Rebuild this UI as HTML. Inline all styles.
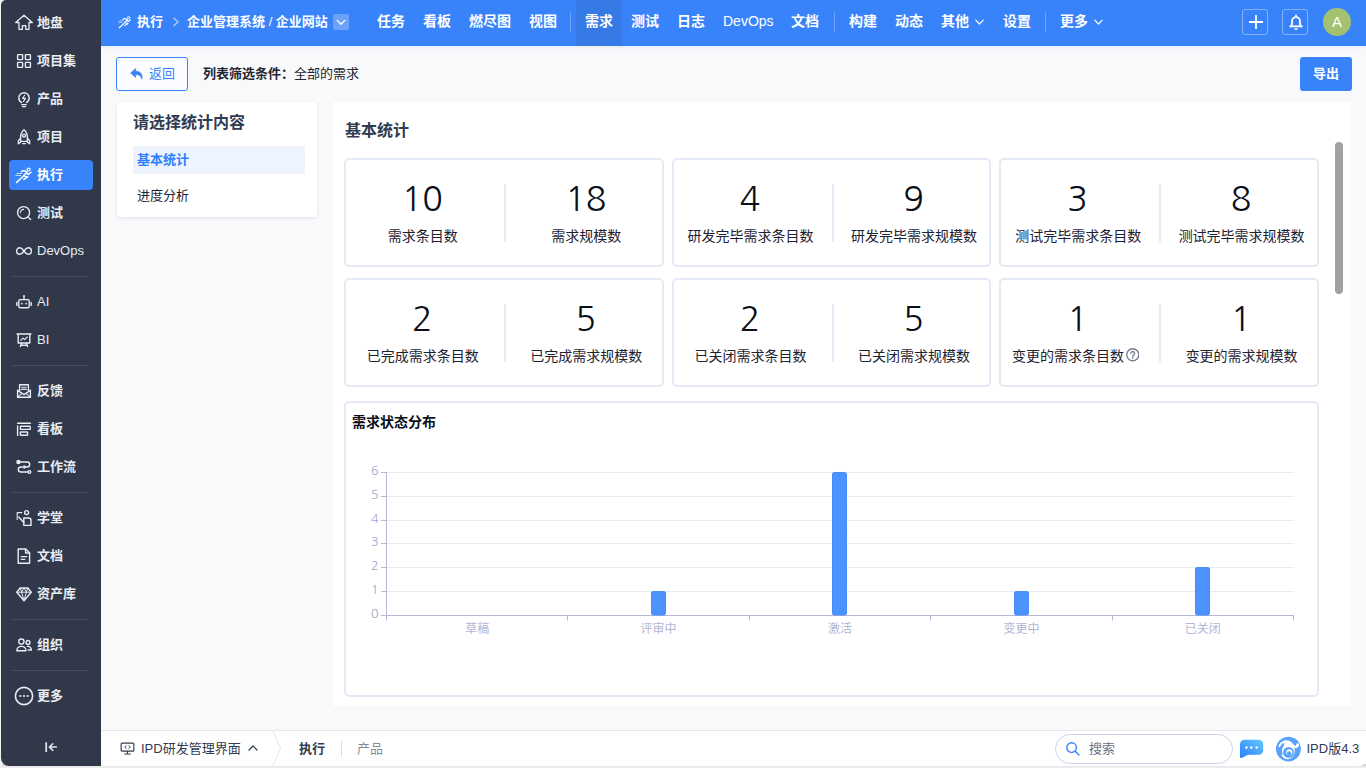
<!DOCTYPE html>
<html lang="zh-CN">
<head>
<meta charset="utf-8">
<title>需求统计</title>
<style>
*{box-sizing:border-box;margin:0;padding:0}
html,body{width:1366px;height:768px;overflow:hidden}
body{background:#f8f9fb;font-family:"Liberation Sans","Noto Sans CJK SC",sans-serif;font-size:13px;color:#313c52;position:relative}
.abs{position:absolute}
/* sidebar */
#side{position:absolute;left:1px;top:0;width:100px;height:766px;background:#303849;border-radius:5px 0 0 8px}
.mi{position:absolute;left:8px;width:84px;height:30px;border-radius:4px;color:#e9ecf3;font-weight:bold;font-size:13px;line-height:30px;white-space:nowrap}
.mi svg{position:absolute;left:6px;top:6px;width:18px;height:18px;fill:none;stroke:#e9ecf3;stroke-width:1.4;stroke-linecap:round;stroke-linejoin:round}
.mi span{position:absolute;left:28px;top:0}
.mi.lat{font-weight:normal}
.mi.on{background:#3883fa;color:#fff}
.mi.on svg{stroke:#fff}
.mi svg{overflow:visible}
.sdiv{position:absolute;left:12px;width:76px;height:1px;background:#475064}
/* header */
#head{position:absolute;left:101px;top:0;width:1265px;height:46px;background:#3883fa;color:#fff;box-shadow:0 1px 3px rgba(30,50,90,.10)}
#head .t{position:absolute;top:0;height:46px;line-height:42px;font-size:14px;font-weight:bold;white-space:nowrap;color:#fff}
#head .n{font-weight:normal}
#head .b13{font-size:13px;line-height:44px}
.hb{top:9px;width:26px;height:26px;border:1px solid #83b1fc;border-radius:3px}
#head .vd{position:absolute;top:12px;width:1px;height:20px;background:#6ea4fb}
/* toolbar */
#back{position:absolute;left:116px;top:57px;width:72px;height:34px;border:1px solid #3883fa;border-radius:3px;background:#fbfcff;color:#3883fa;font-size:13px;line-height:32px}
#exp{position:absolute;left:1300px;top:57px;width:52px;height:34px;border-radius:3px;background:#3883fa;color:#fff;font-weight:bold;font-size:13px;line-height:33px;text-align:center}
/* panels */
#lp{position:absolute;left:117px;top:102px;width:200px;height:115px;background:#fff;border-radius:3px;box-shadow:0 1px 3px rgba(40,60,100,.12)}
#mp{position:absolute;left:333px;top:102px;width:1018px;height:604px;background:#fff}
.card{position:absolute;width:319.670px;height:109px;border:2px solid #e4e9f7;border-radius:5px;background:#fff}
.card .c{position:absolute;top:0;width:158px;height:104px;text-align:center}
.card .num{position:absolute;left:-1px;right:0;top:19px;font-size:34px;line-height:40px;color:#0b0f18;font-family:"NanumGothic","Liberation Sans",sans-serif}
.card .lb{position:absolute;left:0;right:0;top:66px;font-size:14px;line-height:20px;color:#1c2230;white-space:nowrap}
.card .sep{position:absolute;left:158px;top:24px;width:2px;height:58px;background:#e6ebf8}
/* footer */
#foot{position:absolute;left:101px;top:730px;width:1265px;height:36px;background:#fff;border-top:1px solid #e6e8ee;border-radius:0 0 7px 0}
</style>
</head>
<body>
<div class="abs" style="left:0;top:764px;width:1366px;height:4px;background:linear-gradient(#dcdcdc 50%,#e6e6e6 50%,#f0f0f0)"></div>
<div class="abs" style="left:0;top:0;width:2px;height:768px;background:#f1f1f1"></div>
<div id="side">
<div class="mi" style="top:8px"><svg viewBox="0 0 18 18"><path d="M9 1.3 17.3 8.5H14V15.3H10.8V11.7H7.4V15.3H4V8.5H.7Z" stroke-width="1.3"/></svg><span>地盘</span></div>
<div class="mi" style="top:46px"><svg viewBox="0 0 18 18"><rect x="2.6" y="2.6" width="5" height="5" rx=".6"/><rect x="10.4" y="2.6" width="5" height="5" rx=".6"/><rect x="2.6" y="10.4" width="5" height="5" rx=".6"/><rect x="10.4" y="10.4" width="5" height="5" rx=".6"/></svg><span>项目集</span></div>
<div class="mi" style="top:84px"><svg viewBox="0 0 18 18"><path d="M6.6 12.6C4.9 11.7 3.8 10 3.8 8a5.2 5.2 0 0 1 10.4 0c0 2-1.100 3.700-2.800 4.600"/><path d="M6.800 14.600h4.400M7.400 16.600h3.200"/><path d="M9.600 5.200 7.600 8.400h2.800l-2 3.200" stroke-width="1.100"/></svg><span>产品</span></div>
<div class="mi" style="top:122px"><svg viewBox="0 0 18 18"><path d="M9 1.800c2.400 2 3.400 4.600 3.400 7.400v4.200H5.600V9.200C5.600 6.400 6.600 3.800 9 1.800z"/><circle cx="9" cy="7.600" r="1.500"/><path d="M5.600 10.200 3.400 12.600v3.200l2.200-1.600M12.400 10.200l2.200 2.400v3.200l-2.200-1.600M7.600 15.600h2.800"/></svg><span>项目</span></div>
<div class="mi on" style="top:160px"><svg viewBox="0 0 18 18"><circle cx="13.600" cy="3.500" r="1.500" stroke-width="1.200"/><path d="M6.400 5.600C7.800 4.500 9.400 4.500 10.800 5.400L12 5.900 8.600 9.700l4.200 1.200-4 2.500M7.800 10.800 1.600 16.400M11.400 6.800 13.400 8.400 16 6.200" stroke-width="1.500"/><path d="M1.800 7.500h5M.8 9.500h4.800" stroke-width=".9" opacity=".8"/></svg><span>执行</span></div>
<div class="mi" style="top:198px"><svg viewBox="0 0 18 18"><circle cx="8.600" cy="8.600" r="6"/><path d="M13 13l2.600 2.600"/><path d="M5.400 8.600A3.200 3.200 0 0 1 8.600 5.400" stroke-width="1.100"/></svg><span>测试</span></div>
<div class="mi lat" style="top:236px"><svg viewBox="0 0 18 18"><path d="M9 9C7.600 6.800 6.400 5.800 4.800 5.800a3.200 3.200 0 0 0 0 6.400C6.400 12.200 7.600 11.200 9 9s2.600-3.200 4.200-3.200a3.200 3.200 0 0 1 0 6.400C11.600 12.200 10.400 11.200 9 9z"/></svg><span>DevOps</span></div>
<div class="mi lat" style="top:287px"><svg viewBox="0 0 18 18"><rect x="3.800" y="6.600" width="10.400" height="8.200" rx="1.400"/><path d="M9 6.400V3.200"/><circle cx="9" cy="2.800" r=".8" fill="#e9ecf3" stroke="none"/><path d="M1.800 9.400v3M16.200 9.400v3"/><circle cx="6.900" cy="10.600" r=".9" fill="#e9ecf3" stroke="none"/><circle cx="11.100" cy="10.600" r=".9" fill="#e9ecf3" stroke="none"/></svg><span>AI</span></div>
<div class="mi lat" style="top:325px"><svg viewBox="0 0 18 18"><path d="M2 3h14M3.200 3v9h11.600V3M6.600 12.200 5.400 15.600M11.400 12.200l1.200 3.400M5.800 14.200h6.400"/><path d="M5.800 9.400 8 7.200l1.600 1.400 2.600-2.600" stroke-width="1.100"/></svg><span>BI</span></div>
<div class="mi" style="top:376px"><svg viewBox="0 0 18 18"><path d="M2.600 8.200V15.200h12.800V8.200"/><path d="M2.600 8.400 9 12.600l6.400-4.200"/><path d="M4.600 9.400V2.800h8.800v6.600"/><path d="M6.600 5.200h4.800M6.600 7.400h4.800" stroke-width="1.100"/><path d="M2.600 15.200 7 11.400M15.400 15.200 11 11.400" stroke-width="1.100"/></svg><span>反馈</span></div>
<div class="mi" style="top:414px"><svg viewBox="0 0 18 18"><path d="M2.600 3.200h12.800"/><rect x="5.400" y="6.200" width="9.800" height="3.200" rx=".5"/><rect x="5.400" y="12" width="7.200" height="3.200" rx=".5"/><path d="M2.600 6v9.400"/></svg><span>看板</span></div>
<div class="mi" style="top:452px"><svg viewBox="0 0 18 18"><circle cx="3.400" cy="4" r="1.500" fill="#e9ecf3"/><path d="M5 4h7.200a2.500 2.500 0 0 1 0 5H5.800a2.500 2.500 0 0 0 0 5H12.800"/><path d="M9 7.600 10.600 9 9 10.400" stroke-width="1.100"/><circle cx="14.400" cy="14" r="1.400"/></svg><span>工作流</span></div>
<div class="mi" style="top:503px"><svg viewBox="0 0 18 18"><circle cx="11.600" cy="3.600" r="2"/><path d="M8.800 9h4.800a2.400 2.400 0 0 1 2.400 2.400v5H8.800z"/><path d="M3.800 8 8.800 13.400"/><path d="M2.200 3.600h4.600M2.200 3.600v6.800" stroke-width="1.100"/></svg><span>学堂</span></div>
<div class="mi" style="top:541px"><svg viewBox="0 0 18 18"><path d="M3.200 2h7.600l3.800 3.800v10.400H3.200z"/><path d="M10.600 2.200v3.800h3.800"/><path d="M6.200 9.600h5.600M6.200 12.400h3.600" stroke-width="1.100"/></svg><span>文档</span></div>
<div class="mi" style="top:579px"><svg viewBox="0 0 18 18"><path d="M5.200 3h7.600l3.400 4.200L9 15.800 1.800 7.200z"/><path d="M1.800 7.200h14.400M6.600 7.200 9 15.600l2.400-8.400M5.200 3l1.400 4.200L9 3l2.400 4.200L12.800 3" stroke-width="1"/></svg><span>资产库</span></div>
<div class="mi" style="top:630px"><svg viewBox="0 0 18 18"><circle cx="6.400" cy="5.600" r="2.600"/><path d="M1.800 14.800c0-2.600 2-4.400 4.600-4.400s4.600 1.800 4.600 4.400z"/><circle cx="13" cy="6.400" r="1.900"/><path d="M12.400 10.400c2.200-.4 4 1.200 4 3.600h-3.200"/></svg><span>组织</span></div>
<div class="mi" style="top:681px"><svg viewBox="0 0 18 18"><circle cx="9" cy="9" r="8.600" stroke-width="1.600"/><circle cx="5.400" cy="9" r="1.100" fill="#e9ecf3" stroke="none"/><circle cx="9" cy="9" r="1.100" fill="#e9ecf3" stroke="none"/><circle cx="12.600" cy="9" r="1.100" fill="#e9ecf3" stroke="none"/></svg><span>更多</span></div>
<div class="sdiv" style="top:276px"></div>
<div class="sdiv" style="top:365px"></div>
<div class="sdiv" style="top:492px"></div>
<div class="sdiv" style="top:619px"></div>
<div class="sdiv" style="top:670px"></div>
<svg class="abs" style="left:42px;top:740px" width="16" height="14" viewBox="0 0 16 14" fill="none" stroke="#dfe3ec" stroke-width="1.500" stroke-linecap="round" stroke-linejoin="round"><path d="M3.200 2.900v8.400" stroke-width="1.800"/><path d="M13.400 7.100H6.600M9.800 3.800 6.400 7.100 9.800 10.400"/></svg>
</div>
<div id="head">
<svg class="abs" style="left:16.500px;top:15px" width="14" height="14" viewBox="0 0 18 18" fill="none" stroke="#fff" stroke-linecap="round" stroke-linejoin="round"><circle cx="13.600" cy="3.500" r="1.500" stroke-width="1.200"/><path d="M6.400 5.600C7.800 4.500 9.400 4.500 10.800 5.400L12 5.900 8.600 9.700l4.200 1.200-4 2.500M7.800 10.800 1.600 16.400M11.400 6.800 13.400 8.400 16 6.200" stroke-width="1.500"/><path d="M1.800 7.500h5M.8 9.500h4.800" stroke-width=".9" opacity=".8"/></svg>
<div class="t b13" style="left:36px">执行</div>
<svg class="abs" style="left:71px;top:16px" width="8" height="12" viewBox="0 0 8 12" fill="none" stroke="#a9c8fd" stroke-width="1.500" stroke-linecap="round" stroke-linejoin="round"><path d="M2 2.200 6 6 2 9.800"/></svg>
<div class="t b13" style="left:86px">企业管理系统 <span style="font-weight:normal">/</span> 企业网站</div>
<div class="abs" style="left:232px;top:14px;width:16px;height:16px;border-radius:2px;background:#6ba3fb"><svg class="abs" style="left:3px;top:5px" width="10" height="7" viewBox="0 0 10 7" fill="none" stroke="#fff" stroke-width="1.300" stroke-linecap="round" stroke-linejoin="round"><path d="M1.200 1.400 5 5.200 8.800 1.400"/></svg></div>
<div class="abs" style="left:475px;top:0;width:46px;height:46px;background:#367ae5"></div>
<div class="t" style="left:276px">任务</div>
<div class="t" style="left:322px">看板</div>
<div class="t" style="left:368px">燃尽图</div>
<div class="t" style="left:428px">视图</div>
<div class="t" style="left:484px">需求</div>
<div class="t" style="left:530px">测试</div>
<div class="t" style="left:576px">日志</div>
<div class="t n" style="left:622px">DevOps</div>
<div class="t" style="left:690px">文档</div>
<div class="t" style="left:748px">构建</div>
<div class="t" style="left:794px">动态</div>
<div class="t" style="left:840px">其他</div>
<div class="t" style="left:902px">设置</div>
<div class="t" style="left:959px">更多</div>
<div class="vd" style="left:469px"></div>
<div class="vd" style="left:733px"></div>
<div class="vd" style="left:944px"></div>
<svg class="abs" style="left:874px;top:19px" width="9" height="7" viewBox="0 0 9 7" fill="none" stroke="#fff" stroke-width="1.200" stroke-linecap="round" stroke-linejoin="round"><path d="M.8 1.200 4.500 5 8.200 1.200"/></svg>
<svg class="abs" style="left:993px;top:19px" width="9" height="7" viewBox="0 0 9 7" fill="none" stroke="#fff" stroke-width="1.200" stroke-linecap="round" stroke-linejoin="round"><path d="M.8 1.200 4.500 5 8.200 1.200"/></svg>
<div class="abs hb" style="left:1141px"><svg class="abs" style="left:5.5px;top:5px" width="14" height="14" viewBox="0 0 14 14" fill="none" stroke="#fff" stroke-width="1.800"><path d="M7 0v14M0 7h14"/></svg></div>
<div class="abs hb" style="left:1181px"><svg class="abs" style="left:5.5px;top:4px" width="14" height="16" viewBox="0 0 14 16" fill="none" stroke="#fff" stroke-width="1.800" stroke-linejoin="round"><path d="M2.2 12.2C3.2 11 3 9.4 3 7.2a4 4 0 0 1 8 0c0 2.2-.2 3.800.8 5M.4 12.400h13.200"/><path d="M7 .4v2" stroke-width="1.600"/><path d="M5.600 15h2.800" stroke-width="1.600"/></svg></div>
<div class="abs" style="left:1222px;top:8px;width:28px;height:28px;border-radius:14px;background:#a4c170;color:#fff;font-size:15px;line-height:27px;text-align:center">A</div>
</div>
<div id="back"><svg class="abs" style="left:13px;top:10px" width="14" height="12" viewBox="0 0 14 12" fill="#3883fa" stroke="#3883fa" stroke-width=".7" stroke-linejoin="round"><path d="M5.600.6.600 5l5 4.400V6.600c3.400 0 5.400 1 6.200 4.600C12.800 6 10.400 3.400 5.600 3.200z"/></svg><span class="abs" style="left:32px;top:0">返回</span></div>
<div class="abs" style="left:203px;top:58px;height:34px;line-height:32px;font-size:13px;color:#1f2633;white-space:nowrap"><b>列表筛选条件：</b>全部的需求</div>
<div id="exp">导出</div>
<div id="lp">
<div class="abs" style="left:16px;top:9px;font-size:16px;font-weight:bold;line-height:24px;color:#313c52;white-space:nowrap">请选择统计内容</div>
<div class="abs" style="left:16px;top:44px;width:172px;height:28px;background:#edf4fe;color:#2e7fff;font-weight:bold;font-size:13px;line-height:27px;padding-left:4px">基本统计</div>
<div class="abs" style="left:20px;top:84px;font-size:13px;line-height:20px;color:#1f2633">进度分析</div>
</div>
<div id="mp">
<div class="abs" style="left:12px;top:17px;font-size:16px;font-weight:bold;line-height:24px;color:#313c52">基本统计</div>
<div class="card" style="left:11px;top:56px">
<div class="c" style="left:-2.2px"><div class="num">10</div><div class="lb">需求条目数</div></div>
<div class="c" style="left:161.3px"><div class="num">18</div><div class="lb">需求规模数</div></div>
<div class="sep"></div></div>
<div class="card" style="left:338.670px;top:56px">
<div class="c" style="left:-2.2px"><div class="num">4</div><div class="lb">研发完毕需求条目数</div></div>
<div class="c" style="left:161.3px"><div class="num">9</div><div class="lb">研发完毕需求规模数</div></div>
<div class="sep"></div></div>
<div class="card" style="left:666.330px;top:56px">
<div class="c" style="left:-2.2px"><div class="num">3</div><div class="lb">测试完毕需求条目数</div></div>
<div class="c" style="left:161.3px"><div class="num">8</div><div class="lb">测试完毕需求规模数</div></div>
<div class="sep"></div></div>
<div class="card" style="left:11px;top:176px">
<div class="c" style="left:-2.2px"><div class="num">2</div><div class="lb">已完成需求条目数</div></div>
<div class="c" style="left:161.3px"><div class="num">5</div><div class="lb">已完成需求规模数</div></div>
<div class="sep"></div></div>
<div class="card" style="left:338.670px;top:176px">
<div class="c" style="left:-2.2px"><div class="num">2</div><div class="lb">已关闭需求条目数</div></div>
<div class="c" style="left:161.3px"><div class="num">5</div><div class="lb">已关闭需求规模数</div></div>
<div class="sep"></div></div>
<div class="card" style="left:666.330px;top:176px">
<div class="c" style="left:-2.2px"><div class="num">1</div><div class="lb" style="left:-4.800px">变更的需求条目数<svg style="display:inline-block;vertical-align:-.5px;margin-left:2px" width="13.500" height="13.500" viewBox="0 0 13 13" fill="none" stroke="#747b8c" stroke-width="1.250"><circle cx="6.500" cy="6.500" r="5.800"/><path d="M4.700 5.200a1.800 1.800 0 1 1 2.600 1.600c-.6.300-.8.700-.8 1.300" stroke-linecap="round"/><circle cx="6.500" cy="9.700" r=".8" fill="#747b8c" stroke="none"/></svg></div></div>
<div class="c" style="left:161.3px"><div class="num">1</div><div class="lb">变更的需求规模数</div></div>
<div class="sep"></div></div>
<div class="abs" style="left:11px;top:299px;width:975px;height:296px;border:2px solid #e4e9f7;border-radius:5px"></div>
<div class="abs" style="left:19px;top:310px;font-size:14px;font-weight:bold;line-height:20px;color:#0b0f18">需求状态分布</div>
<svg class="abs" style="left:0;top:350px" width="1003" height="200" viewBox="333 452 1003 200" font-family="Liberation Sans, Noto Sans CJK SC, sans-serif" font-size="12"><path d="M386.5 591.5H1294.0" stroke="#e8eaf3" stroke-width="1"/><path d="M386.5 567.5H1294.0" stroke="#e8eaf3" stroke-width="1"/><path d="M386.5 543.5H1294.0" stroke="#e8eaf3" stroke-width="1"/><path d="M386.5 520.5H1294.0" stroke="#e8eaf3" stroke-width="1"/><path d="M386.5 496.5H1294.0" stroke="#e8eaf3" stroke-width="1"/><path d="M386.5 472.5H1294.0" stroke="#e8eaf3" stroke-width="1"/><path d="M386.5 472.0V615.5H1294.0" fill="none" stroke="#b6b8d6" stroke-width="1"/><path d="M381 615.5h5.500" stroke="#b6b8d6" stroke-width="1"/><text x="378.600" y="618.1" text-anchor="end" fill="#a4a8cc" font-family="NanumGothic, Liberation Sans, sans-serif" font-size="12.500">0</text><path d="M381 591.5h5.500" stroke="#b6b8d6" stroke-width="1"/><text x="378.600" y="594.1" text-anchor="end" fill="#a4a8cc" font-family="NanumGothic, Liberation Sans, sans-serif" font-size="12.500">1</text><path d="M381 567.5h5.500" stroke="#b6b8d6" stroke-width="1"/><text x="378.600" y="570.1" text-anchor="end" fill="#a4a8cc" font-family="NanumGothic, Liberation Sans, sans-serif" font-size="12.500">2</text><path d="M381 543.5h5.500" stroke="#b6b8d6" stroke-width="1"/><text x="378.600" y="546.1" text-anchor="end" fill="#a4a8cc" font-family="NanumGothic, Liberation Sans, sans-serif" font-size="12.500">3</text><path d="M381 520.5h5.500" stroke="#b6b8d6" stroke-width="1"/><text x="378.600" y="523.1" text-anchor="end" fill="#a4a8cc" font-family="NanumGothic, Liberation Sans, sans-serif" font-size="12.500">4</text><path d="M381 496.5h5.500" stroke="#b6b8d6" stroke-width="1"/><text x="378.600" y="499.1" text-anchor="end" fill="#a4a8cc" font-family="NanumGothic, Liberation Sans, sans-serif" font-size="12.500">5</text><path d="M381 472.5h5.500" stroke="#b6b8d6" stroke-width="1"/><text x="378.600" y="475.1" text-anchor="end" fill="#a4a8cc" font-family="NanumGothic, Liberation Sans, sans-serif" font-size="12.500">6</text><path d="M386.5 615.5v5" stroke="#b6b8d6" stroke-width="1"/><path d="M567.5 615.5v5" stroke="#b6b8d6" stroke-width="1"/><path d="M749.5 615.5v5" stroke="#b6b8d6" stroke-width="1"/><path d="M930.5 615.5v5" stroke="#b6b8d6" stroke-width="1"/><path d="M1112.5 615.5v5" stroke="#b6b8d6" stroke-width="1"/><path d="M1293.5 615.5v5" stroke="#b6b8d6" stroke-width="1"/><text x="477.2" y="632.500" text-anchor="middle" fill="#b3b6d6">草稿</text><text x="658.6" y="632.500" text-anchor="middle" fill="#b3b6d6">评审中</text><rect x="651.5" y="591.5" width="14" height="23.5" rx="1.800" fill="#4b93ff" stroke="#458cf6" stroke-width="1"/><text x="840.0" y="632.500" text-anchor="middle" fill="#b3b6d6">激活</text><rect x="832.5" y="472.5" width="14" height="142.5" rx="1.800" fill="#4b93ff" stroke="#458cf6" stroke-width="1"/><text x="1021.4" y="632.500" text-anchor="middle" fill="#b3b6d6">变更中</text><rect x="1014.5" y="591.5" width="14" height="23.5" rx="1.800" fill="#4b93ff" stroke="#458cf6" stroke-width="1"/><text x="1202.8" y="632.500" text-anchor="middle" fill="#b3b6d6">已关闭</text><rect x="1195.5" y="567.5" width="14" height="47.5" rx="1.800" fill="#4b93ff" stroke="#458cf6" stroke-width="1"/></svg>
</div>
<div class="abs" style="left:1335px;top:142px;width:8px;height:152px;border-radius:4px;background:#a1a1a1"></div>
<div id="foot">
<svg class="abs" style="left:19px;top:11px" width="15" height="13.100" viewBox="0 0 16 14" fill="none" stroke="#313c52" stroke-width="1.250" stroke-linecap="round" stroke-linejoin="round"><rect x="1.200" y="1.200" width="13.600" height="8.600" rx="1"/><path d="M8 10v2.600M5 12.800h6"/><path d="M6.600 4 5 5.500l1.600 1.500M9.400 4 11 5.500 9.400 7" stroke-width="1"/></svg>
<div class="abs" style="left:40px;top:8px;font-size:13px;line-height:20px;color:#313c52;white-space:nowrap">IPD研发管理界面</div>
<svg class="abs" style="left:147px;top:13px" width="10" height="8" viewBox="0 0 10 8" fill="none" stroke="#313c52" stroke-width="1.200" stroke-linecap="round" stroke-linejoin="round"><path d="M1 6 5 2l4 4"/></svg>
<svg class="abs" style="left:171px;top:0px" width="10" height="35" viewBox="0 0 10 35" fill="none" stroke="#e3e6ec" stroke-width="1"><path d="M1 0 8.500 17.500 1 35"/></svg>
<div class="abs" style="left:198px;top:8px;font-size:13px;font-weight:bold;line-height:20px;color:#313c52">执行</div>
<div class="abs" style="left:240px;top:10px;width:1px;height:16px;background:#dcdfe6"></div>
<div class="abs" style="left:256px;top:8px;font-size:13px;line-height:20px;color:#838a9d">产品</div>
<div class="abs" style="left:954px;top:3px;width:178px;height:30px;border:1px solid #cdd3ee;border-radius:15px;background:#fff"><svg class="abs" style="left:9px;top:6px" width="16" height="16" viewBox="0 0 16 16" fill="none" stroke="#3883fa" stroke-width="1.400" stroke-linecap="round"><circle cx="6.600" cy="6.600" r="4.800"/><path d="M10.200 10.200 14 14"/></svg><span class="abs" style="left:33px;top:4px;font-size:13px;line-height:20px;color:#6b7385">搜索</span></div>
<svg class="abs" style="left:1139px;top:8px" width="24" height="20" viewBox="0 0 24 20"><defs><linearGradient id="cg" x1="0" y1="1" x2="1" y2="0"><stop offset="0" stop-color="#2a80fb"/><stop offset="1" stop-color="#63c8fc"/></linearGradient></defs><path d="M4.500.8H18.700A4.500 4.500 0 0 1 23.200 5.300V11.200A4.500 4.500 0 0 1 18.700 15.700H10C6.500 15.700 4 17.800 1.600 19 .8 19.300 0 18.800 0 17.800V5.300A4.500 4.500 0 0 1 4.500.8Z" fill="url(#cg)"/><circle cx="6.400" cy="8.550" r="1.250" fill="#fff"/><circle cx="11.300" cy="8.550" r="1.250" fill="#fff"/><circle cx="16.700" cy="8.550" r="1.250" fill="#fff"/></svg>
<svg class="abs" style="left:1173px;top:4px" width="28" height="28" viewBox="-14.400 -14.040 28 28"><circle r="12.400" fill="#57a2fb"/><ellipse cx="-.9" cy="2" rx="7.300" ry="8.200" fill="#fff"/><path d="M-8.600-3.100C-7-7-2-9 1.500-6.400 3.600-4.800 4.400-2.200 7.200-2 8.600-2 9.200-3.200 9.300-4.600" fill="none" stroke="#fff" stroke-width="2.600" stroke-linecap="round"/><path d="M-5.500-4.400C-6.600-3.200-7.500-1.200-7.650 1.300-7.700 2.800-7.500 3.900-7.100 4.900" fill="none" stroke="#57a2fb" stroke-width="2.600" stroke-linecap="round"/><circle cx=".18" cy="3.400" r="5.400" fill="#57a2fb"/><circle cx=".9" cy="3.300" r="3" fill="#fff"/><circle cx=".7" cy="4.300" r="2.100" fill="#57a2fb"/></svg>
<div class="abs" style="left:1205.5px;top:8px;font-size:13px;line-height:20px;color:#313c52;white-space:nowrap">IPD版4.3</div>
</div>
</body>
</html>
